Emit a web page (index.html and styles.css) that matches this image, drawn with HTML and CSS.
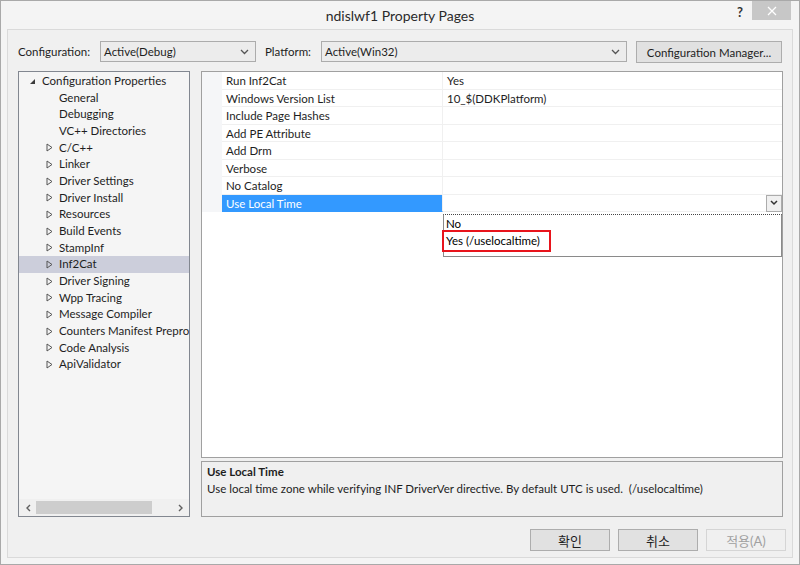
FILE: index.html
```html
<!DOCTYPE html>
<html lang="ko">
<head>
  <meta charset="UTF-8">
  <title>ndislwf1 Property Pages</title>
  <link rel="stylesheet" href="styles.css">
</head>
<body>

<div class="window">
  <div class="titlebar">
    <span class="title">ndislwf1 Property Pages</span>
    <span class="help">?</span>
    <span class="close">
      <svg width="10" height="10" viewBox="0 0 10 10"><path d="M1 1 L9 9 M9 1 L1 9" stroke="#fff" stroke-width="1.3"/></svg>
    </span>
  </div>

  <div class="client">
    <div class="toolbar">
      <label class="lbl lbl-config">Configuration:</label>
      <div class="select select-config">
        <span>Active(Debug)</span>
        <svg class="chev" width="9" height="6" viewBox="0 0 9 6"><path d="M1 1 L4.5 4.5 L8 1" fill="none" stroke="#555" stroke-width="1.3"/></svg>
      </div>
      <label class="lbl lbl-platform">Platform:</label>
      <div class="select select-platform">
        <span>Active(Win32)</span>
        <svg class="chev" width="9" height="6" viewBox="0 0 9 6"><path d="M1 1 L4.5 4.5 L8 1" fill="none" stroke="#555" stroke-width="1.3"/></svg>
      </div>
      <button class="btn btn-manager">Configuration Manager...</button>
    </div>

    <div class="main">
      <div class="tree">
        <ul class="tree-list">
          <li class="node root">
            <svg class="arrow" width="7" height="7" viewBox="0 0 7 7"><polygon points="6,1 6,6 1,6" fill="#3c3c3c"/></svg>
            Configuration Properties
          </li>
          <li class="node leaf">General</li>
          <li class="node leaf">Debugging</li>
          <li class="node leaf">VC++ Directories</li>
          <li class="node"><svg class="arrow" width="7" height="9" viewBox="0 0 7 9"><polygon points="1,1 6,4.5 1,8" fill="none" stroke="#555"/></svg>C/C++</li>
          <li class="node"><svg class="arrow" width="7" height="9" viewBox="0 0 7 9"><polygon points="1,1 6,4.5 1,8" fill="none" stroke="#555"/></svg>Linker</li>
          <li class="node"><svg class="arrow" width="7" height="9" viewBox="0 0 7 9"><polygon points="1,1 6,4.5 1,8" fill="none" stroke="#555"/></svg>Driver Settings</li>
          <li class="node"><svg class="arrow" width="7" height="9" viewBox="0 0 7 9"><polygon points="1,1 6,4.5 1,8" fill="none" stroke="#555"/></svg>Driver Install</li>
          <li class="node"><svg class="arrow" width="7" height="9" viewBox="0 0 7 9"><polygon points="1,1 6,4.5 1,8" fill="none" stroke="#555"/></svg>Resources</li>
          <li class="node"><svg class="arrow" width="7" height="9" viewBox="0 0 7 9"><polygon points="1,1 6,4.5 1,8" fill="none" stroke="#555"/></svg>Build Events</li>
          <li class="node"><svg class="arrow" width="7" height="9" viewBox="0 0 7 9"><polygon points="1,1 6,4.5 1,8" fill="none" stroke="#555"/></svg>StampInf</li>
          <li class="node selected"><svg class="arrow" width="7" height="9" viewBox="0 0 7 9"><polygon points="1,1 6,4.5 1,8" fill="none" stroke="#555"/></svg>Inf2Cat</li>
          <li class="node"><svg class="arrow" width="7" height="9" viewBox="0 0 7 9"><polygon points="1,1 6,4.5 1,8" fill="none" stroke="#555"/></svg>Driver Signing</li>
          <li class="node"><svg class="arrow" width="7" height="9" viewBox="0 0 7 9"><polygon points="1,1 6,4.5 1,8" fill="none" stroke="#555"/></svg>Wpp Tracing</li>
          <li class="node"><svg class="arrow" width="7" height="9" viewBox="0 0 7 9"><polygon points="1,1 6,4.5 1,8" fill="none" stroke="#555"/></svg>Message Compiler</li>
          <li class="node"><svg class="arrow" width="7" height="9" viewBox="0 0 7 9"><polygon points="1,1 6,4.5 1,8" fill="none" stroke="#555"/></svg><span class="clip">Counters Manifest Preprocessor</span></li>
          <li class="node"><svg class="arrow" width="7" height="9" viewBox="0 0 7 9"><polygon points="1,1 6,4.5 1,8" fill="none" stroke="#555"/></svg>Code Analysis</li>
          <li class="node"><svg class="arrow" width="7" height="9" viewBox="0 0 7 9"><polygon points="1,1 6,4.5 1,8" fill="none" stroke="#555"/></svg>ApiValidator</li>
        </ul>
        <div class="hscroll">
          <svg class="sarrow" width="6" height="8" viewBox="0 0 6 8"><path d="M5 1 L2 4 L5 7" fill="none" stroke="#606060" stroke-width="1.4"/></svg>
          <div class="track"><div class="thumb"></div></div>
          <svg class="sarrow" width="6" height="8" viewBox="0 0 6 8"><path d="M1 1 L4 4 L1 7" fill="none" stroke="#606060" stroke-width="1.4"/></svg>
        </div>
      </div>

      <div class="right">
        <div class="grid">
          <div class="row"><div class="gutter"></div><div class="name">Run Inf2Cat</div><div class="value">Yes</div></div>
          <div class="row"><div class="gutter"></div><div class="name">Windows Version List</div><div class="value">10_$(DDKPlatform)</div></div>
          <div class="row"><div class="gutter"></div><div class="name">Include Page Hashes</div><div class="value"></div></div>
          <div class="row"><div class="gutter"></div><div class="name">Add PE Attribute</div><div class="value"></div></div>
          <div class="row"><div class="gutter"></div><div class="name">Add Drm</div><div class="value"></div></div>
          <div class="row"><div class="gutter"></div><div class="name">Verbose</div><div class="value"></div></div>
          <div class="row"><div class="gutter"></div><div class="name">No Catalog</div><div class="value"></div></div>
          <div class="row active">
            <div class="gutter"></div>
            <div class="name">Use Local Time</div>
            <div class="value">
              <span class="drop-btn">
                <svg width="8" height="6" viewBox="0 0 8 6"><path d="M1 1 L4 4 L7 1" fill="none" stroke="#333" stroke-width="1.5"/></svg>
              </span>
            </div>
          </div>

          <div class="droplist">
            <div class="opt opt-focus">No</div>
            <div class="opt">Yes (/uselocaltime)</div>
            <div class="mark"></div>
          </div>
        </div>

        <div class="desc">
          <div class="desc-title">Use Local Time</div>
          <div class="desc-text">Use local time zone while verifying INF DriverVer directive. By default UTC is used.&nbsp; (/uselocaltime)</div>
        </div>
      </div>
    </div>

    <div class="buttons">
      <button class="btn btn-dlg">확인</button>
      <button class="btn btn-dlg">취소</button>
      <button class="btn btn-dlg disabled">적용(A)</button>
    </div>
  </div>
</div>

</body>
</html>
```

FILE: styles.css
```css
body {
  margin: 0;
  padding: 0;
  font-family: Lato, "Noto Sans CJK KR", sans-serif;
  font-size: 11.5px;
  color: #1e1e1e;
  background-color: #f0f0f0;
}

.window {
  width: 800px;
  height: 565px;
  box-sizing: border-box;
  border: 1px solid #a9a9a9;
  background-color: #f4f4f4;
  display: flex;
  flex-direction: column;
}

.titlebar {
  height: 28px;
  position: relative;
  display: flex;
  align-items: center;
  justify-content: center;
}

.title {
  font-size: 14px;
  color: #2b2b2b;
  margin-top: 1px;
}

.help {
  position: absolute;
  left: 736px;
  top: 3px;
  font-weight: bold;
  font-size: 13px;
  color: #333;
}

.close {
  position: absolute;
  left: 751px;
  top: 0;
  width: 39px;
  height: 19px;
  background-color: #c7c7c7;
  display: flex;
  align-items: center;
  justify-content: center;
}

.client {
  flex: 1;
  margin: 0 6px 6px 6px;
  border: 1px solid #dadada;
  background-color: #f0f0f0;
  padding: 11px 9px 0 10px;
  display: flex;
  flex-direction: column;
}

/* configuration row */
.toolbar {
  height: 22px;
  display: flex;
  align-items: flex-start;
}

.lbl {
  line-height: 21px;
}

.lbl-config {
  width: 82px;
}

.lbl-platform {
  width: 56px;
  margin-left: 9px;
}

.select {
  height: 21px;
  box-sizing: border-box;
  border: 1px solid #acacac;
  background-color: #ececec;
  display: flex;
  align-items: center;
  justify-content: space-between;
  padding: 0 6px 0 3px;
}

.select-config {
  width: 156px;
}

.select-platform {
  width: 306px;
}

.btn {
  font-family: Lato, "Noto Sans CJK KR", sans-serif;
  font-size: 11.5px;
  color: #1e1e1e;
  height: 22px;
  box-sizing: border-box;
  border: 1px solid #adadad;
  background-color: #e1e1e1;
  padding: 0;
  cursor: pointer;
}

.btn-manager {
  width: 146px;
  margin-left: 9px;
}

/* main area */
.main {
  margin-top: 8px;
  display: flex;
  height: 446px;
}

.tree {
  width: 172px;
  box-sizing: border-box;
  border: 1px solid #828790;
  background-color: #f5f5f5;
  display: flex;
  flex-direction: column;
}

.tree-list {
  list-style: none;
  margin: 0;
  padding: 1px 0 0 0;
  flex: 1;
  overflow: hidden;
}

.node {
  height: 16.67px;
  line-height: 16.67px;
  white-space: nowrap;
  padding-left: 40px;
  display: flex;
  align-items: center;
  overflow: hidden;
}

.node .arrow {
  flex-shrink: 0;
  margin-left: -13px;
  margin-right: 6px;
}

.node .clip {
  flex-shrink: 0;
}

.node.root {
  padding-left: 23px;
}

.node.leaf {
  padding-left: 40px;
}

.node.selected {
  background-color: #cccedb;
}

.hscroll {
  height: 17px;
  display: flex;
  align-items: center;
  background-color: #f0f0f0;
  padding: 0 5px 0 6px;
}

.track {
  flex: 1;
  height: 13px;
  margin: 0 5px;
}

.thumb {
  width: 116px;
  height: 13px;
  background-color: #cdcdcd;
}

.right {
  width: 582px;
  margin-left: 11px;
  display: flex;
  flex-direction: column;
}

/* property grid */
.grid {
  height: 387px;
  box-sizing: border-box;
  border: 1px solid #a0a0a0;
  background-color: #fff;
  position: relative;
}

.row {
  display: flex;
  height: 17.55px;
  line-height: 17px;
}

.gutter {
  width: 20px;
  background-color: #f5f6f8;
}

.name {
  width: 221px;
  padding-left: 4px;
  box-sizing: border-box;
  border-bottom: 1px solid #f0f0f0;
  border-right: 1px solid #f0f0f0;
}

.value {
  flex: 1;
  padding-left: 4px;
  border-bottom: 1px solid #f0f0f0;
  position: relative;
}

.row.active .name {
  background-color: #3399ff;
  color: #fff;
  border-bottom-color: #3399ff;
}

.drop-btn {
  position: absolute;
  right: 0;
  top: 0;
  width: 16px;
  height: 17px;
  box-sizing: border-box;
  border: 1px solid #acacac;
  background-color: #f0f0f0;
  display: flex;
  align-items: center;
  justify-content: center;
}

.droplist {
  position: absolute;
  left: 241px;
  top: 142px;
  width: 339px;
  height: 43px;
  box-sizing: border-box;
  border: 1px solid #8a8a8a;
  border-top: 1px dotted #444;
  background-color: #fff;
  padding-top: 0;
}

.opt {
  height: 17px;
  line-height: 17px;
  padding-left: 2px;
  color: #000;
}

.mark {
  position: absolute;
  left: -2px;
  top: 15px;
  width: 109px;
  height: 22px;
  box-sizing: border-box;
  border: 2px solid #e8141c;
}

/* description */
.desc {
  margin-top: 3px;
  height: 56px;
  box-sizing: border-box;
  border: 1px solid #a0a0a0;
  background-color: #f0f0f0;
  padding: 1px 5px;
}

.desc-title {
  font-weight: bold;
  line-height: 17px;
}

.desc-text {
  line-height: 17px;
}

/* dialog buttons */
.buttons {
  margin-top: 12px;
  margin-right: -3px;
  display: flex;
  justify-content: flex-end;
}

.btn-dlg {
  width: 80px;
  margin-left: 8px;
  font-size: 13px;
}

.btn-dlg.disabled {
  color: #a0a0a0;
  border-color: #d5d5d5;
  background-color: #f0f0f0;
  cursor: default;
}
```
